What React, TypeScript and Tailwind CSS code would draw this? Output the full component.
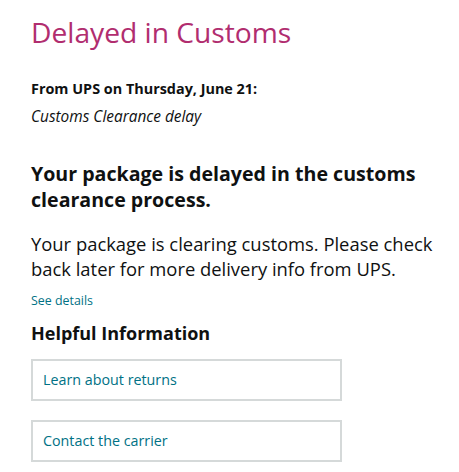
import React from 'react';

const links = ['Learn about returns', 'Contact the carrier'];

const App: React.FC = () => {
  return (
    <div className="min-h-screen bg-white px-[31px] pt-[12px] text-[#0f1111]" style={{ fontFamily: '"Open Sans", "Noto Sans", sans-serif' }}>
      <h1 className="text-[28.2px] leading-[40px] text-[#b12d6f]">Delayed in Customs</h1>
      <div className="mt-[27px] text-[14.4px] font-bold leading-[20px]">From UPS on Thursday, June 21:</div>
      <div className="mt-[8px] text-[15.4px] italic leading-[20px]">Customs Clearance delay</div>
      <h2 className="mt-[34px] w-[400px] text-[19.6px] font-bold leading-[26px]">
        Your package is delayed in the customs clearance process.
      </h2>
      <p className="mt-[18px] w-[412px] text-[18.4px] leading-[25px]">
        Your package is clearing customs. Please check back later for more delivery info from UPS.
      </p>
      <a href="#" className="mt-[11px] block text-[12.4px] leading-[18px] text-[#007185]">See details</a>
      <h3 className="mt-[10px] text-[18px] font-bold leading-[26px]">Helpful Information</h3>
      <div className="mt-[13px] flex w-[311px] flex-col gap-[19px]">
        {links.map(label => (
          <a
            key={label}
            href="#"
            className="flex h-[42px] items-center border-2 border-[#d5d9d9] px-[10px] text-[14.3px] text-[#007185]"
          >
            {label}
          </a>
        ))}
      </div>
    </div>
  );
};

export default App;
